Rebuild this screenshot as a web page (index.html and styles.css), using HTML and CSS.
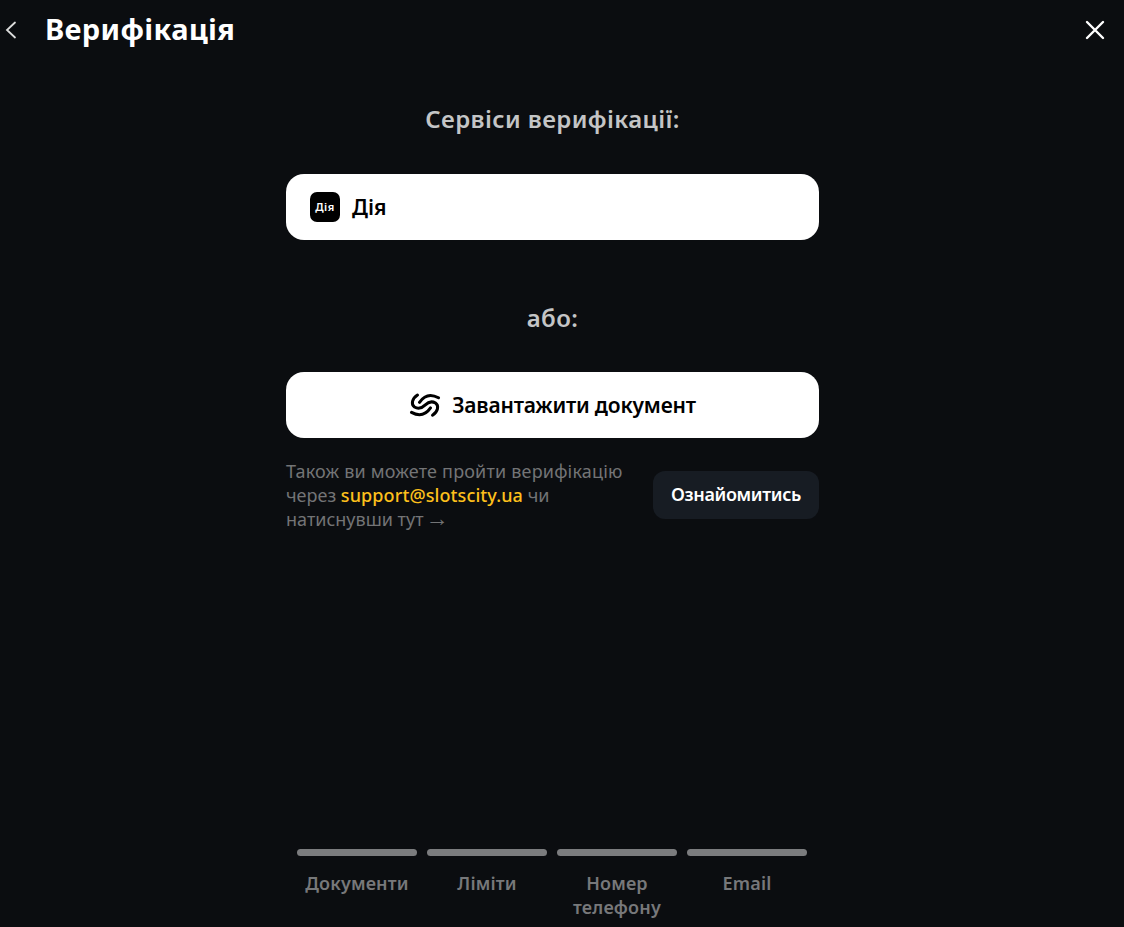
FILE: index.html
```html
<!DOCTYPE html>
<html lang="uk">
<head>
    <meta charset="UTF-8">
    <meta name="viewport" content="width=device-width, initial-scale=1.0">
    <title>Верифікація</title>
    <link rel="stylesheet" href="styles.css">
</head>

<body>
    <header class="header">
        <svg class="back" viewBox="0 0 12 18">
            <path d="M10 1.5L2 9l8 7.5" />
        </svg>
        <h1 class="title">Верифікація</h1>
        <svg class="close" viewBox="0 0 20 20">
            <path d="M2 2l16 16M18 2L2 18" />
        </svg>
    </header>

    <main class="content">
        <h2 class="subtitle services">Сервіси верифікації:</h2>
        <div class="option">
            <span class="diia">Дія</span>
            <span class="diia-name">Дія</span>
        </div>

        <h2 class="subtitle or">або:</h2>
        <div class="option center">
            <svg class="logo" viewBox="0 0 32 26">
                <path d="M29.500 5.800C20.500 0.800 14.500 4.500 10.500 10.300" />
                <path d="M8.500 3C3 6.500 1.800 12.500 5.500 15.100C9.500 17.600 12.500 16.500 16 13.100C19.500 9.700 22.500 8.600 26.500 11.100C30.200 13.700 29 19.700 23.500 23.200" />
                <path d="M2.500 20.400C11.500 25.400 17.500 21.700 21.500 15.900" />
            </svg>
            <span class="upload">Завантажити документ</span>
        </div>

        <div class="note">
            <p class="note-text">
                <span class="wide">Також ви можете пройти верифікацію</span><br>
                через <a class="mail">support@slotscity.ua</a> чи<br>
                натиснувши тут<span class="arrow">→</span>
            </p>
            <button class="btn">Ознайомитись</button>
        </div>
    </main>

    <ul class="steps">
        <li><i class="line"></i><span class="step">Документи</span></li>
        <li><i class="line"></i><span class="step">Ліміти</span></li>
        <li><i class="line"></i><span class="step">Номер телефону</span></li>
        <li><i class="line"></i><span class="step">Email</span></li>
    </ul>
</body>

</html>
```
FILE: styles.css
```css
* {
    box-sizing: border-box;
}

body {
    margin: 0;
    height: 100vh;
    overflow: hidden;
    display: flex;
    flex-direction: column;
    background-color: #0b0d10;
    font-family: "Noto Sans", "Open Sans", sans-serif;
    color: #fff;
}

h1, h2, p, ul {
    margin: 0;
    padding: 0;
}

svg {
    flex: none;
    fill: none;
    stroke: #fff;
    stroke-width: 2;
    stroke-linecap: round;
}

.header {
    height: 60px;
    padding: 0 19px 0 5px;
    display: flex;
    align-items: center;
}

.back {
    width: 12px;
    height: 18px;
    margin-right: 28px;
    stroke: #ddd;
    stroke-width: 1.8;
}

.close {
    width: 20px;
    height: 20px;
    margin-left: auto;
    stroke-width: 2.4;
}

.title {
    font-size: 29px;
    line-height: 36px;
    padding-bottom: 2px;
    font-weight: 700;
    letter-spacing: 0.35px;
}

.content {
    width: 533px;
    margin-left: 286px;
    flex: 1;
}

.subtitle {
    text-align: center;
    font-size: 24px;
    line-height: 30px;
    font-weight: 600;
    letter-spacing: 0.4px;
    color: #c4c5c6;
}

.services {
    margin: 44px 0 40px;
}

.or {
    margin: 63px 0 39px;
}

.option {
    height: 66px;
    padding: 0 24px;
    display: flex;
    align-items: center;
    gap: 11px;
    border-radius: 18px;
    background-color: #fff;
    color: #000;
    font-size: 21px;
    font-weight: 600;
}

.center {
    justify-content: center;
}

.diia {
    width: 30px;
    height: 30px;
    line-height: 29px;
    border-radius: 7px;
    background-color: #000;
    color: #fff;
    text-align: center;
    font-size: 11px;
    letter-spacing: 0.5px;
}

.diia-name {
    margin-left: 1px;
}

.upload {
    letter-spacing: -0.2px;
}

.logo {
    width: 32px;
    height: 26px;
    stroke: #000;
    stroke-width: 3;
}

.note {
    margin-top: 21px;
    display: flex;
    align-items: center;
    justify-content: space-between;
}

.note-text {
    font-size: 18px;
    line-height: 24px;
    color: #737476;
    white-space: nowrap;
}

.wide {
    letter-spacing: 0.18px;
}

.mail {
    color: #fdc01c;
    font-weight: 500;
    letter-spacing: 0.1px;
}

.arrow {
    margin-left: 2px;
    font-family: "Liberation Sans", sans-serif;
    font-size: 23px;
    line-height: 1;
}

.btn {
    width: 166px;
    height: 48px;
    padding: 0 0 2px;
    border: 0;
    border-radius: 12px;
    background-color: #171c23;
    color: #fff;
    font-family: inherit;
    font-size: 18px;
    font-weight: 600;
    letter-spacing: -0.35px;
}

.steps {
    width: 510px;
    height: 78px;
    margin-left: 297px;
    display: flex;
    gap: 10px;
    list-style: none;
}

.steps li {
    width: 120px;
    text-align: center;
}

.line {
    display: block;
    height: 7px;
    margin-bottom: 15px;
    border-radius: 4px;
    background-color: #7b7c7e;
}

.step {
    display: block;
    font-size: 18px;
    line-height: 24px;
    font-weight: 600;
    letter-spacing: 0.15px;
    color: #77787a;
}
```
